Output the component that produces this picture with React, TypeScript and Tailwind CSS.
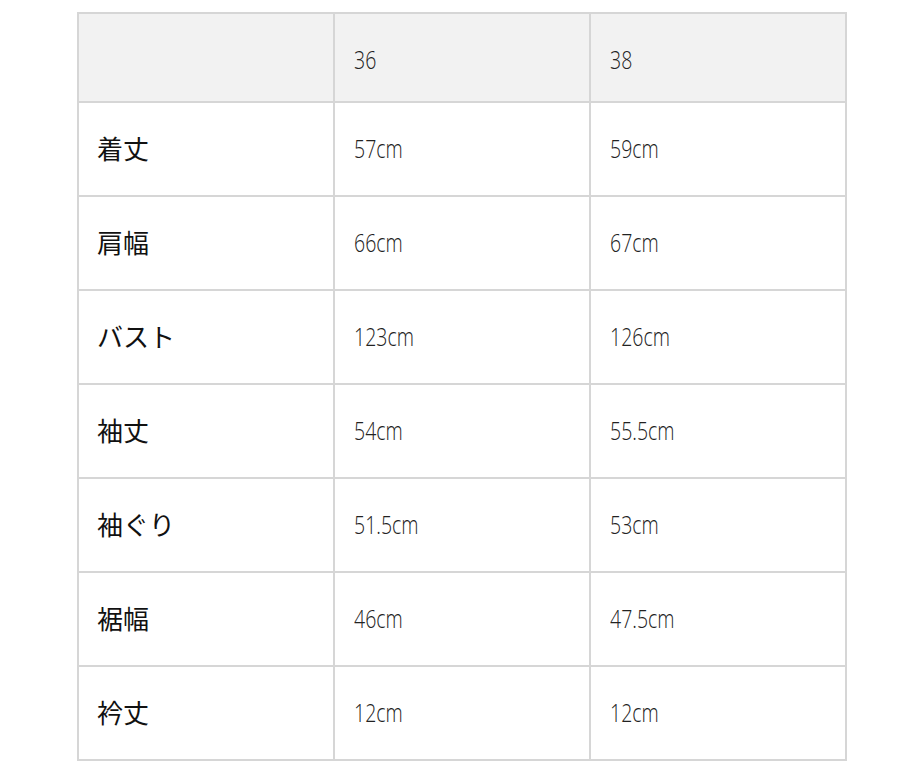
const rows = [
  { label: "着丈", a: "57cm", b: "59cm" },
  { label: "肩幅", a: "66cm", b: "67cm" },
  { label: "バスト", a: "123cm", b: "126cm" },
  { label: "袖丈", a: "54cm", b: "55.5cm" },
  { label: "袖ぐり", a: "51.5cm", b: "53cm" },
  { label: "裾幅", a: "46cm", b: "47.5cm" },
  { label: "衿丈", a: "12cm", b: "12cm" },
];

// condensed look: no narrow font installed, so squeeze Open Sans Light
function Num({ children }: { children: string }) {
  return (
    <span className="inline-block origin-left scale-x-[0.78] font-['Open_Sans',sans-serif] text-[25px] font-light text-[#222]">
      {children}
    </span>
  );
}

export default function App() {
  return (
    <div className="min-h-[784px] bg-white pt-[12px] pl-[77px]">
      <div className="grid w-[770px] grid-cols-3 gap-[2px] bg-[#d6d6d6] p-[2px]">
        <div className="h-[87px] bg-[#f2f2f2]" />
        <div className="flex h-[87px] items-center bg-[#f2f2f2] pl-[19px] pt-[4px]">
          <Num>36</Num>
        </div>
        <div className="flex h-[87px] items-center bg-[#f2f2f2] pl-[19px] pt-[4px]">
          <Num>38</Num>
        </div>
        {rows.map((r) => (
          <>
            <div
              key={r.label}
              className="flex h-[92px] items-center bg-white pb-[3px] pl-[18px] font-['Noto_Sans_CJK_JP',sans-serif] text-[26px] font-normal text-[#111]"
            >
              {r.label}
            </div>
            <div className="flex h-[92px] items-center bg-white pl-[19px]">
              <Num>{r.a}</Num>
            </div>
            <div className="flex h-[92px] items-center bg-white pl-[19px]">
              <Num>{r.b}</Num>
            </div>
          </>
        ))}
      </div>
    </div>
  );
}
